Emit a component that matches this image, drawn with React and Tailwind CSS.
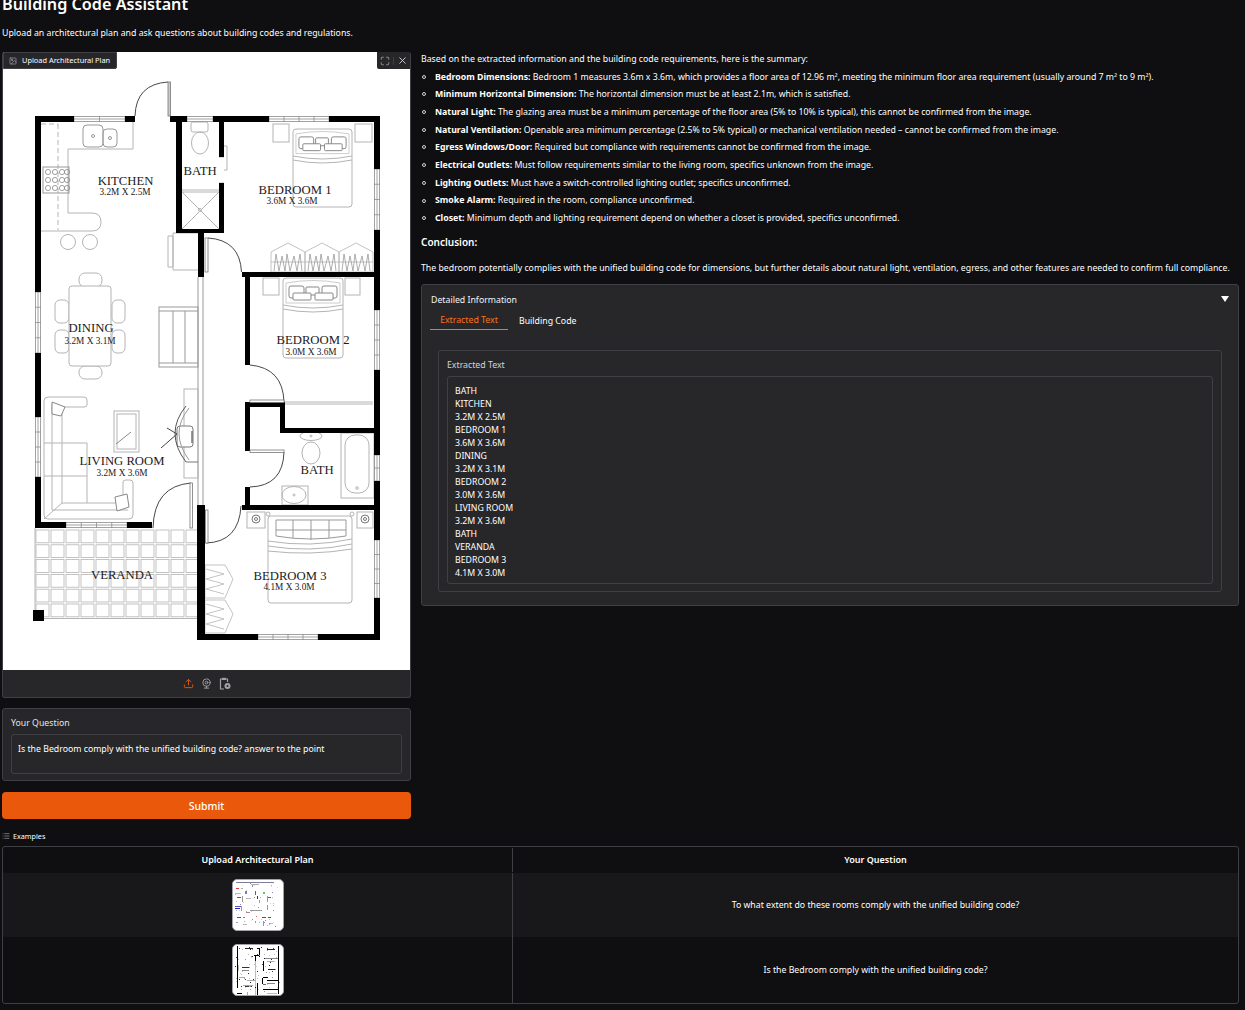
import { Maximize, X, Webcam, Upload, List, Image as ImageIcon } from "lucide-react";

const LINE = "#b4b4b4";

const bullets = [
  ["Bedroom Dimensions:", " Bedroom 1 measures 3.6m x 3.6m, which provides a floor area of 12.96 m², meeting the minimum floor area requirement (usually around 7 m² to 9 m²)."],
  ["Minimum Horizontal Dimension:", " The horizontal dimension must be at least 2.1m, which is satisfied."],
  ["Natural Light:", " The glazing area must be a minimum percentage of the floor area (5% to 10% is typical), this cannot be confirmed from the image."],
  ["Natural Ventilation:", " Openable area minimum percentage (2.5% to 5% typical) or mechanical ventilation needed – cannot be confirmed from the image."],
  ["Egress Windows/Door:", " Required but compliance with requirements cannot be confirmed from the image."],
  ["Electrical Outlets:", " Must follow requirements similar to the living room, specifics unknown from the image."],
  ["Lighting Outlets:", " Must have a switch-controlled lighting outlet; specifics unconfirmed."],
  ["Smoke Alarm:", " Required in the room, compliance unconfirmed."],
  ["Closet:", " Minimum depth and lighting requirement depend on whether a closet is provided, specifics unconfirmed."],
];

const extracted = ["BATH", "KITCHEN", "3.2M X 2.5M", "BEDROOM 1", "3.6M X 3.6M", "DINING", "3.2M X 3.1M", "BEDROOM 2", "3.0M X 3.6M", "LIVING ROOM", "3.2M X 3.6M", "BATH", "VERANDA", "BEDROOM 3", "4.1M X 3.0M"];

const walls = [
  // top
  [35, 116, 39, 6], [125, 116, 10, 6], [170, 116, 17, 6], [213, 116, 56, 6], [329, 116, 51, 6],
  // left
  [35, 116, 6, 176], [35, 353, 6, 64], [35, 477, 6, 51],
  // living bottom
  [35, 522, 31, 6], [127, 522, 25, 6],
  // right
  [374, 116, 6, 53], [374, 230, 6, 80], [374, 370, 6, 85], [374, 481, 6, 59], [374, 598, 6, 42],
  // bedroom 3 bottom
  [197, 634, 61, 6], [318, 634, 62, 6],
  // bath 1 box
  [176, 116, 6, 117], [176, 229, 48, 4], [219, 116, 5, 41], [219, 183, 5, 50],
  // centre walls
  [198, 233, 6, 44], [197, 505, 8, 135],
  // bedroom 1 / 2
  [242, 272, 138, 5], [245, 277, 5, 88],
  // bath 2 block
  [245, 402, 5, 49], [245, 402, 40, 5], [280, 402, 5, 30], [280, 428, 100, 5],
  [245, 487, 5, 21], [242, 505, 138, 5],
  // post
  [33, 610, 11, 11],
];

// x, y, length, panes - windows across the wall
const windowsH = [[74, 116, 51, 2], [187, 116, 26, 1], [269, 116, 60, 4], [66, 522, 61, 4], [258, 634, 60, 4]];
const windowsV = [[35, 292, 61, 4], [35, 417, 60, 4], [374, 169, 61, 4], [374, 310, 60, 4], [374, 455, 26, 2], [374, 540, 58, 4]];

const Pillows = ({ x, y, w }) => {
  const s = w / 60;
  return (
    <g transform={`translate(${x} ${y}) scale(${s})`} fill="#fff" stroke={LINE} strokeWidth="1">
      <path d="M3 4 Q30 -1 57 4 V24 H3 Z" stroke="#ccc" />
      <rect x="6" y="7" width="15" height="12" rx="2" stroke="#888" />
      <rect x="39" y="7" width="15" height="12" rx="2" stroke="#888" />
      <rect x="23" y="8" width="13" height="8" rx="1" stroke="#888" />
      <rect x="10" y="14" width="18" height="7" rx="1" stroke="#888" />
      <rect x="32" y="14" width="18" height="7" rx="1" stroke="#888" />
    </g>
  );
};

const Bed = ({ x, y, w, h }) => (
  <g fill="none" stroke={LINE} strokeWidth="1">
    <rect x={x} y={y} width={w} height={h} rx="3" />
    <path d={`M${x} ${y + 27} Q${x + w / 2} ${y + 33} ${x + w} ${y + 27}`} />
    <path d={`M${x} ${y + 31} Q${x + w / 2} ${y + 37} ${x + w} ${y + 31}`} />
    <Pillows x={x} y={y + 1} w={w} />
  </g>
);

const ClosetH = ({ x, y }) => (
  <g fill="none" stroke={LINE} strokeWidth="0.8">
    <path d={`M${x} ${y + 9} L${x + 17} ${y} L${x + 34} ${y + 9} V${y + 29} H${x} Z`} />
    <path d={`M${x} ${y + 19} H${x + 34}`} />
    <path d={`M${x + 3} ${y + 28} L${x + 5} ${y + 11} L${x + 8} ${y + 28} L${x + 11} ${y + 13} L${x + 14} ${y + 28} L${x + 16} ${y + 11} L${x + 19} ${y + 28} L${x + 23} ${y + 13} L${x + 26} ${y + 28} L${x + 29} ${y + 11} L${x + 31} ${y + 28}`} stroke="#999" />
  </g>
);

const ClosetV = ({ x, y }) => (
  <g fill="none" stroke={LINE} strokeWidth="0.8">
    <path d={`M${x} ${y} H${x + 20} L${x + 28} ${y + 14} L${x + 20} ${y + 33} H${x} Z`} />
    <path d={`M${x + 1} ${y + 4} L${x + 19} ${y + 9} L${x + 1} ${y + 14} L${x + 19} ${y + 19} L${x + 1} ${y + 24} L${x + 19} ${y + 29}`} />
  </g>
);

const Nightstand = ({ x, y, w, h }) => <rect x={x} y={y} width={w} height={h} fill="none" stroke={LINE} strokeWidth="1" />;

const Label = ({ x, y, size, children }) => (
  <text x={x} y={y} textAnchor="middle" fontSize={size} fontFamily="'Liberation Serif', serif" fill="#1a1a1a">
    {children}
  </text>
);

// drawing of the plan, viewBox uses the coordinates of the screenshot
const FloorPlan = () => {
  const tiles = [];
  for (let c = 0; c < 11; c++) {
    for (let r = 0; r < 6; r++) {
      tiles.push(<rect key={`${c}-${r}`} x={36 + c * 15} y={530 + r * 14.8} width="13" height="12.8" fill="none" stroke={LINE} strokeWidth="0.8" />);
    }
  }
  const burners = [];
  for (const bx of [48, 55, 62, 67]) {
    for (const by of [172, 180, 188]) {
      burners.push(<circle key={`${bx}-${by}`} cx={bx} cy={by} r="2.6" fill="none" stroke="#8a8a8a" strokeWidth="0.8" />);
    }
  }
  return (
    <svg viewBox="3 52 407 618" className="block w-full h-[618px] bg-white">
      {/* kitchen */}
      <g fill="none" stroke={LINE} strokeWidth="1">
        <path d="M133 122 V149 H68 V213 H92 Q101 213 101 222 Q101 231 92 231 H41" />
        <path d="M58 124 V230" strokeDasharray="5 3" />
        <path d="M41 124 H58" strokeDasharray="5 3" />
        <rect x="83" y="125" width="20" height="22" rx="4" stroke="#999" />
        <rect x="103" y="129" width="14" height="18" rx="4" stroke="#999" />
        <circle cx="93" cy="136" r="1.5" stroke="#999" />
        <circle cx="110" cy="138" r="1.5" stroke="#999" />
        <rect x="43" y="167" width="26" height="26" stroke="#999" />
        <circle cx="68" cy="242" r="7.5" />
        <circle cx="90" cy="242" r="7.5" />
        <path d="M198 233 H173 V270 H198 M168 236 H173 V267 H168 Z" />
      </g>
      {burners}
      {/* dining */}
      <g fill="#fff" stroke={LINE} strokeWidth="1">
        <rect x="79" y="273" width="23" height="14" rx="6" />
        <rect x="79" y="366" width="23" height="13" rx="6" />
        <rect x="55" y="300" width="14" height="23" rx="5" />
        <rect x="55" y="330" width="14" height="23" rx="5" />
        <rect x="112" y="300" width="13" height="23" rx="5" />
        <rect x="112" y="330" width="13" height="23" rx="5" />
        <rect x="69" y="286" width="42" height="80" rx="3" />
      </g>
      {/* stairs */}
      <g fill="none" stroke="#999" strokeWidth="1">
        <rect x="159" y="307" width="39" height="60" />
        <path d="M159 311 H198 M159 363 H198 M173 311 V363 M185 311 V363" />
        <path d="M198 277 V505 M203 277 V505" />
      </g>
      {/* living */}
      <g fill="none" stroke={LINE} strokeWidth="1">
        <path d="M44 401 Q44 397 48 397 H84 Q87 397 87 400 V405 Q87 407 84 407 H62 V503 H123 V482 Q123 480 126 480 H130 Q133 480 133 483 V515 Q133 519 129 519 H48 Q44 519 44 515 Z" />
        <path d="M52 404 V510 H128 M44 443 H87 V503 M44 476 H87 M44 519 L62 503" />
        <path d="M52 402 L65 407 L61 416 L52 414 Z M115 497 L127 494 L129 507 L117 511 Z" fill="#fff" stroke="#888" />
        <rect x="114" y="411" width="25" height="41" />
        <rect x="117" y="414" width="19" height="35" />
        <path d="M116 444 L131 432" stroke="#888" />
        <rect x="184" y="389" width="14" height="89" />
        <rect x="177" y="426" width="16" height="21" rx="3" fill="#fff" stroke="#777" />
        <path d="M192 431 V443" stroke="#777" strokeWidth="1.5" />
        <path d="M186 406 Q164 433 186 462" stroke="#555" />
        <path d="M189 408 Q169 433 189 460" stroke="#999" />
        <path d="M161 448 L177 434 L167 428" stroke="#444" />
        <path d="M186 462 H198" stroke="#777" />
      </g>
      {/* bath 1 */}
      <g fill="none" stroke={LINE} strokeWidth="1">
        <rect x="191" y="122" width="17" height="10" rx="2" />
        <ellipse cx="200" cy="143" rx="8.5" ry="11" />
        <path d="M182 190 H219 M182 192 H219 M182 192 L219 229 M219 192 L182 229" />
        <circle cx="200" cy="210" r="1.5" />
        <path d="M224 146 H227 V170 H224 M219 157 H224 M219 183 H224" />
      </g>
      {/* bedroom 1, 2, 3 */}
      <Nightstand x={273} y={124} w={16} h={18} />
      <Nightstand x={355} y={124} w={17} h={18} />
      <Bed x={293} y={129} w={59} h={78} />
      <ClosetH x={271} y={243} />
      <ClosetH x={305} y={243} />
      <ClosetH x={339} y={243} />
      <Nightstand x={263} y={278} w={16} h={17} />
      <Nightstand x={345} y={278} w={15} h={17} />
      <Bed x={283} y={278} w={60} h={80} />
      <path d="M285 402 H373 M285 404 H373" fill="none" stroke={LINE} strokeWidth="1" />
      <Nightstand x={247} y={512} w={18} h={16} />
      <Nightstand x={357} y={512} w={16} h={16} />
      <g fill="none" stroke="#777" strokeWidth="1">
        <circle cx="256" cy="519" r="4" />
        <circle cx="256" cy="519" r="1.5" />
        <circle cx="365" cy="519" r="4" />
        <circle cx="365" cy="519" r="1.5" />
      </g>
      <g fill="none" stroke={LINE} strokeWidth="1">
        <rect x="268" y="516" width="84" height="87" rx="3" />
        <path d="M268 541 Q310 548 352 539 M268 546 Q310 553 352 544 M268 551 Q310 556 352 549" />
        <path d="M276 520 H346 V536 Q310 542 276 536 Z" stroke="#999" />
        <path d="M293 520 V538 M311 520 V540 M329 520 V538 M276 530 H346" stroke="#999" />
        <circle cx="268" cy="514" r="2" />
        <circle cx="352" cy="514" r="2" />
      </g>
      <ClosetV x={205} y={565} />
      <ClosetV x={205} y={600} />
      {/* bath 2 */}
      <g fill="none" stroke={LINE} strokeWidth="1">
        <ellipse cx="311" cy="436" rx="11" ry="4.5" />
        <circle cx="311" cy="436" r="1" />
        <ellipse cx="311" cy="453" rx="9" ry="11" />
        <rect x="341" y="433" width="33" height="65" />
        <rect x="345" y="435" width="24" height="58" rx="10" />
        <circle cx="357" cy="488" r="1.3" />
        <rect x="282" y="486" width="26" height="19" />
        <ellipse cx="294" cy="495" rx="12" ry="8.5" />
        <circle cx="294" cy="495" r="1" />
      </g>
      {/* veranda */}
      {tiles}
      <path d="M44 618.5 H197 M35 528 V610" fill="none" stroke={LINE} strokeWidth="1" />
      {/* windows */}
      {windowsH.map(([x, y, w, n]) => (
        <g key={`h${x}${y}`} fill="none" stroke="#8c8c8c" strokeWidth="0.8">
          <rect x={x} y={y + 0.5} width={w} height="5" />
          <path d={`M${x} ${y + 3} H${x + w}`} />
          {Array.from({ length: n - 1 }, (_, i) => (
            <path key={i} d={`M${x + (w / n) * (i + 1)} ${y} V${y + 6}`} />
          ))}
        </g>
      ))}
      {windowsV.map(([x, y, h, n]) => (
        <g key={`v${x}${y}`} fill="none" stroke="#8c8c8c" strokeWidth="0.8">
          <rect x={x + 0.5} y={y} width="5" height={h} />
          <path d={`M${x + 3} ${y} V${y + h}`} />
          {Array.from({ length: n - 1 }, (_, i) => (
            <path key={i} d={`M${x} ${y + (h / n) * (i + 1)} H${x + 6}`} />
          ))}
        </g>
      ))}
      {/* walls */}
      {walls.map(([x, y, w, h]) => (
        <rect key={`${x}-${y}-${w}`} x={x} y={y} width={w} height={h} fill="#000" />
      ))}
      {/* doors */}
      <g fill="none" stroke="#333" strokeWidth="0.9">
        <path d="M135 116 Q136 84 168 82" />
        <path d="M208 238 Q240 240 241.5 272" />
        <path d="M250 365 Q283 368 284 402" />
        <path d="M250 487 Q283 486 284 452" />
        <path d="M206 543 Q239 542 241 506" />
        <path d="M153 528 Q154 486 191 483" />
      </g>
      <g fill="#fff" stroke="#777" strokeWidth="0.8">
        <rect x="168" y="82" width="2.5" height="34" fill="#ccc" />
        <rect x="205" y="238" width="3" height="34" />
        <rect x="250" y="400" width="34" height="2.5" />
        <rect x="250" y="450" width="34" height="2.5" />
        <rect x="205.5" y="510" width="2.5" height="33" />
        <rect x="190" y="483" width="2.5" height="45" />
      </g>
      {/* labels */}
      <Label x={125.5} y={185} size={12.7}>KITCHEN</Label>
      <Label x={125} y={195} size={9.3}>3.2M X 2.5M</Label>
      <Label x={200} y={175} size={12.7}>BATH</Label>
      <Label x={295} y={194} size={12.7}>BEDROOM 1</Label>
      <Label x={292} y={204} size={9.3}>3.6M X 3.6M</Label>
      <Label x={91} y={332} size={12.7}>DINING</Label>
      <Label x={90} y={344} size={9.3}>3.2M X 3.1M</Label>
      <Label x={313} y={344} size={12.7}>BEDROOM 2</Label>
      <Label x={311} y={355} size={9.3}>3.0M X 3.6M</Label>
      <Label x={122} y={465} size={12.7}>LIVING ROOM</Label>
      <Label x={122} y={476} size={9.3}>3.2M X 3.6M</Label>
      <Label x={317} y={474} size={12.7}>BATH</Label>
      <Label x={122} y={579} size={12.7}>VERANDA</Label>
      <Label x={290} y={580} size={12.7}>BEDROOM 3</Label>
      <Label x={289} y={590} size={9.3}>4.1M X 3.0M</Label>
    </svg>
  );
};

const thumbA = [
  [3, 2, 38, 1, "#7c7c9c"], [18, 4, 8, 1, "#aaa"], [3, 8, 3, 1, "#e33"], [8, 8, 2, 1, "#aaa"], [12, 11, 2, 3, "#77c"],
  [22, 11, 1, 4, "#55c"], [2, 13, 6, 1, "#bbb"], [30, 12, 2, 2, "#5c5"], [4, 17, 4, 1, "#e22"], [13, 18, 5, 1, "#bbb"],
  [24, 16, 1, 3, "#22e"], [34, 17, 4, 1, "#e22"], [9, 16, 1, 6, "#999"], [34, 16, 1, 6, "#999"], [26, 20, 1, 3, "#999"],
  [2, 26, 6, 1, "#55b"], [2, 28, 5, 1, "#22c"], [17, 30, 12, 1, "#999"], [13, 32, 4, 1, "#a88"], [34, 25, 1, 5, "#999"],
  [8, 26, 1, 5, "#999"], [4, 37, 4, 1, "#e11"], [10, 37, 2, 1, "#e55"], [29, 37, 4, 1, "#e11"], [35, 37, 3, 1, "#e11"],
  [22, 41, 1, 2, "#5c5"], [30, 41, 1, 5, "#999"], [3, 42, 2, 1, "#99c"], [10, 44, 4, 1, "#bbb"], [37, 43, 3, 1, "#bbb"],
];

const thumbB = [
  [4, 1, 1, 42, "#000"], [45, 1, 1, 48, "#000"], [12, 3, 8, 1, "#222"], [24, 3, 3, 1, "#000"], [34, 4, 8, 1, "#222"],
  [26, 3, 1, 9, "#000"], [21, 10, 6, 1, "#000"], [22, 11, 1, 6, "#000"], [32, 13, 13, 1, "#888"], [30, 16, 1, 10, "#000"],
  [34, 16, 8, 1, "#aaa"], [35, 24, 7, 1, "#222"], [5, 20, 1, 6, "#bbb"], [9, 22, 8, 1, "#333"], [9, 25, 7, 1, "#888"],
  [30, 32, 5, 1, "#000"], [29, 33, 1, 6, "#000"], [34, 35, 11, 1, "#000"], [30, 44, 15, 1, "#000"], [22, 16, 1, 34, "#bbb"],
  [24, 38, 1, 13, "#000"], [4, 48, 5, 1, "#000"], [10, 40, 10, 1, "#aaa"], [12, 41, 7, 1, "#333"], [14, 35, 8, 1, "#aaa"],
  [30, 39, 3, 1, "#666"], [34, 48, 10, 1, "#bbb"], [14, 47, 1, 3, "#aaa"], [34, 38, 8, 1, "#888"], [6, 32, 6, 1, "#aaa"],
];

// scattered specks, the downscaled plan looks like noise at this size
const specks = (seed, colors, count) => {
  const out = [];
  let s = seed;
  const next = (m) => {
    s = (s * 1103515245 + 12345) % 2147483648;
    return Math.floor(s / 65536) % m;
  };
  for (let i = 0; i < count; i++) {
    out.push([2 + next(45), 2 + next(45), 1, 1, colors[next(colors.length)]]);
  }
  return out;
};

const thumbAAll = [...thumbA, ...specks(7, ["#ccc", "#bbb", "#e55", "#88c", "#ddd", "#8c8"], 45)];
const thumbBAll = [...thumbB, ...specks(11, ["#222", "#bbb", "#999", "#ccc", "#444"], 70)];

const Thumb = ({ rects }) => (
  <div className="w-[52px] h-[52px] rounded-[5px] border border-[#a1a1aa] bg-white overflow-hidden">
    <svg viewBox="0 0 50 50" className="block w-full h-full" shapeRendering="crispEdges">
      {rects.map(([x, y, w, h, c], i) => (
        <rect key={i} x={x} y={y} width={w} height={h} fill={c} />
      ))}
    </svg>
  </div>
);

const ClipboardIcon = () => (
  <svg width="12" height="13" viewBox="0 0 12 13" fill="none" stroke="#a1a1aa" strokeWidth="1.2">
    <path d="M3 2 H1.5 V12 H5" />
    <path d="M7 2 H8.5 V5" />
    <rect x="3" y="0.8" width="4" height="2.2" fill="#a1a1aa" stroke="none" />
    <circle cx="8.5" cy="9" r="3" fill="#a1a1aa" stroke="none" />
    <circle cx="8.5" cy="9" r="1" fill="#27272a" stroke="none" />
  </svg>
);

export default function App() {
  return (
    <div className="bg-[#0f0f11] text-white pl-[2px] pr-[6px] text-[8.75px] font-['Noto_Sans','Open_Sans',sans-serif] overflow-hidden h-[1010px]">
      <h1 className="-mt-[6px] text-[16.2px] leading-[20px] font-semibold">Building Code Assistant</h1>
      <p className="mt-[12px] leading-[14px]">Upload an architectural plan and ask questions about building codes and regulations.</p>

      <div className="mt-[12px] grid grid-cols-[409px_minmax(0,1fr)] gap-[10px]">
        <div>
          <div className="relative rounded-[3px] border border-[#3f3f46] bg-[#27272a] border-t-0">
            <FloorPlan />
            <div className="absolute left-0 top-0 h-[17px] w-[114px] flex items-center gap-[5px] pl-[5px] bg-[#27272a] rounded-br-[2px] border border-[#3f3f46] text-[7.4px] whitespace-nowrap">
              <ImageIcon size={8} className="text-[#a1a1aa]" />
              <span>Upload Architectural Plan</span>
            </div>
            <div className="absolute right-0 top-0 h-[17px] w-[33px] flex items-center justify-center gap-[3px] bg-[#27272a] rounded-bl-[2px] text-[#a1a1aa]">
              <Maximize size={10} />
              <span className="w-px h-[8px] bg-[#3f3f46]"></span>
              <X size={11} className="text-[#d4d4d8]" />
            </div>
            <div className="h-[27px] flex items-center justify-center gap-[7px]">
              <Upload size={11} className="text-[#ea580c]" />
              <Webcam size={11} className="text-[#a1a1aa]" />
              <ClipboardIcon />
            </div>
          </div>

          <div className="mt-[10px] h-[73px] rounded-[3px] border border-[#3f3f46] bg-[#27272a] pt-[7px] px-[8px]">
            <div className="leading-[14px] text-[#e4e4e7]">Your Question</div>
            <div className="mt-[4px] h-[40px] rounded-[3px] border border-[#3f3f46] px-[6px] pt-[7px] leading-[14px]">
              Is the Bedroom comply with the unified building code? answer to the point
            </div>
          </div>

          <div className="mt-[11px] h-[27px] pt-[2px] rounded-[4px] bg-[#ea580c] flex items-center justify-center text-[10.5px] font-medium">Submit</div>
        </div>

        <div className="leading-[14px] min-w-0">
          <p>Based on the extracted information and the building code requirements, here is the summary:</p>
          <ul className="mt-[1.7px]">
            {bullets.map(([b, t]) => (
              <li key={b} className="relative pl-[14px] h-[17.7px] flex items-center whitespace-pre">
                <span className="absolute left-[1px] top-[7px] w-[4px] h-[4px] rounded-full border border-[#d4d4d8]"></span>
                <span><b className="font-bold">{b}</b>{t}</span>
              </li>
            ))}
          </ul>
          <h2 className="mt-[7px] text-[10px] font-semibold leading-[16px]">Conclusion:</h2>
          <p className="mt-[11px]">The bedroom potentially complies with the unified building code for dimensions, but further details about natural light, ventilation, egress, and other features are needed to confirm full compliance.</p>

          <div className="mt-[9px] h-[322px] rounded-[3px] border border-[#3f3f46] bg-[#27272a] relative">
            <div className="absolute top-[11px] right-[9px] w-0 h-0 border-x-[4px] border-x-transparent border-t-[6px] border-t-white"></div>
            <div className="pt-[8px] pl-[9px] text-[#f4f4f5]">Detailed Information</div>
            <div className="mt-[3px] flex pl-[8px]">
              <div className="w-[78px] h-[20px] pt-[2px] flex items-center justify-center border-b border-[#f97316] text-[#f97316]">Extracted Text</div>
              <div className="ml-[11px] h-[20px] pt-[2px] flex items-center">Building Code</div>
            </div>
            <div className="mt-[20px] mx-[16px] h-[242px] rounded-[3px] border border-[#3f3f46] pt-[7px] px-[8px]">
              <div className="leading-[14px] text-[#d4d4d8]">Extracted Text</div>
              <div className="mt-[4px] h-[208px] rounded-[3px] border border-[#3f3f46] px-[7px] pt-[8px] leading-[13px]">
                {extracted.map((l, i) => (
                  <div key={i}>{l}</div>
                ))}
              </div>
            </div>
          </div>
        </div>
      </div>

      <div className="mt-[11px] flex items-center gap-[3px] h-[12px] text-[7.2px]">
        <List size={8} className="text-[#a1a1aa]" />
        <span>Examples</span>
      </div>
      <div className="mt-[4px] rounded-[3px] border border-[#3f3f46] grid grid-cols-[510px_1fr] grid-rows-[26px_64px_66px] text-center">
        <div className="flex items-center justify-center font-semibold text-[9px] border-r border-[#3f3f46] my-px">Upload Architectural Plan</div>
        <div className="flex items-center justify-center font-semibold text-[9px]">Your Question</div>
        <div className="bg-[#18181b] flex items-center justify-center border-r border-[#3f3f46]"><Thumb rects={thumbAAll} /></div>
        <div className="bg-[#18181b] flex items-center justify-center pt-[2px]">To what extent do these rooms comply with the unified building code?</div>
        <div className="flex items-center justify-center border-r border-[#3f3f46]"><Thumb rects={thumbBAll} /></div>
        <div className="flex items-center justify-center pt-[2px]">Is the Bedroom comply with the unified building code?</div>
      </div>
    </div>
  );
}
